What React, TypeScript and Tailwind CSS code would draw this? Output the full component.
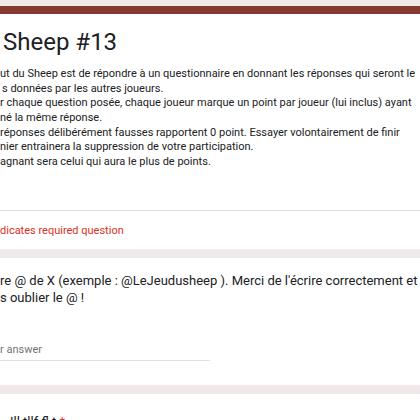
import React from "react";

export default function App() {
  const desc = [
    "ut du Sheep est de répondre à un questionnaire en donnant les réponses qui seront le",
    "s données par les autres joueurs.",
    "r chaque question posée, chaque joueur marque un point par joueur (lui inclus) ayant",
    "né la même réponse.",
    "réponses délibérément fausses rapportent 0 point. Essayer volontairement de finir",
    "nier entrainera la suppression de votre participation.",
    "agnant sera celui qui aura le plus de points.",
  ];
  return (
    <div
      className="w-[420px] h-[420px] overflow-hidden bg-[#efeae9] pt-[6px] flex flex-col gap-[9px]"
      style={{ fontFamily: "Roboto, 'Liberation Sans', sans-serif" }}
    >
      <div className="bg-white border-t-[8px] border-[#843a31] shrink-0">
        <div className="pt-[12px] pl-[3px] text-[24px] leading-[32px] text-[#202124] whitespace-nowrap">
          Sheep #13
        </div>
        <div className="mt-[9px] text-[11px] leading-[14.67px] text-[#202124] whitespace-nowrap pb-[40px]">
          {desc.map((l, i) => (
            <div key={i} className={i === 1 ? "pl-[2px]" : ""}>
              {l}
            </div>
          ))}
        </div>
        <div className="border-t border-[#dadce0] h-[39px] text-[11px] leading-[13px] text-[#d93025] pt-[13px] whitespace-nowrap">
          dicates required question
        </div>
      </div>
      <div className="bg-white h-[127px] shrink-0 pt-[14px]">
        <div className="text-[13px] leading-[17px] text-[#202124] whitespace-nowrap">
          <div>re @ de X (exemple : @LeJeudusheep ). Merci de l'écrire correctement et</div>
          <div>s oublier le @ !</div>
        </div>
        <div className="mt-[37px] w-[210px] border-b border-[#e0e0e0] pb-[4px] text-[11px] leading-[13px] text-[#70757a]">
          r answer
        </div>
      </div>
      <div className="bg-white flex-1 pt-[19px] pl-[10px] text-[13px] leading-[17px] text-[#202124] whitespace-nowrap">
        Ill   tllf   fl   t   <span className="text-[#d93025]">*</span>
      </div>
    </div>
  );
}
